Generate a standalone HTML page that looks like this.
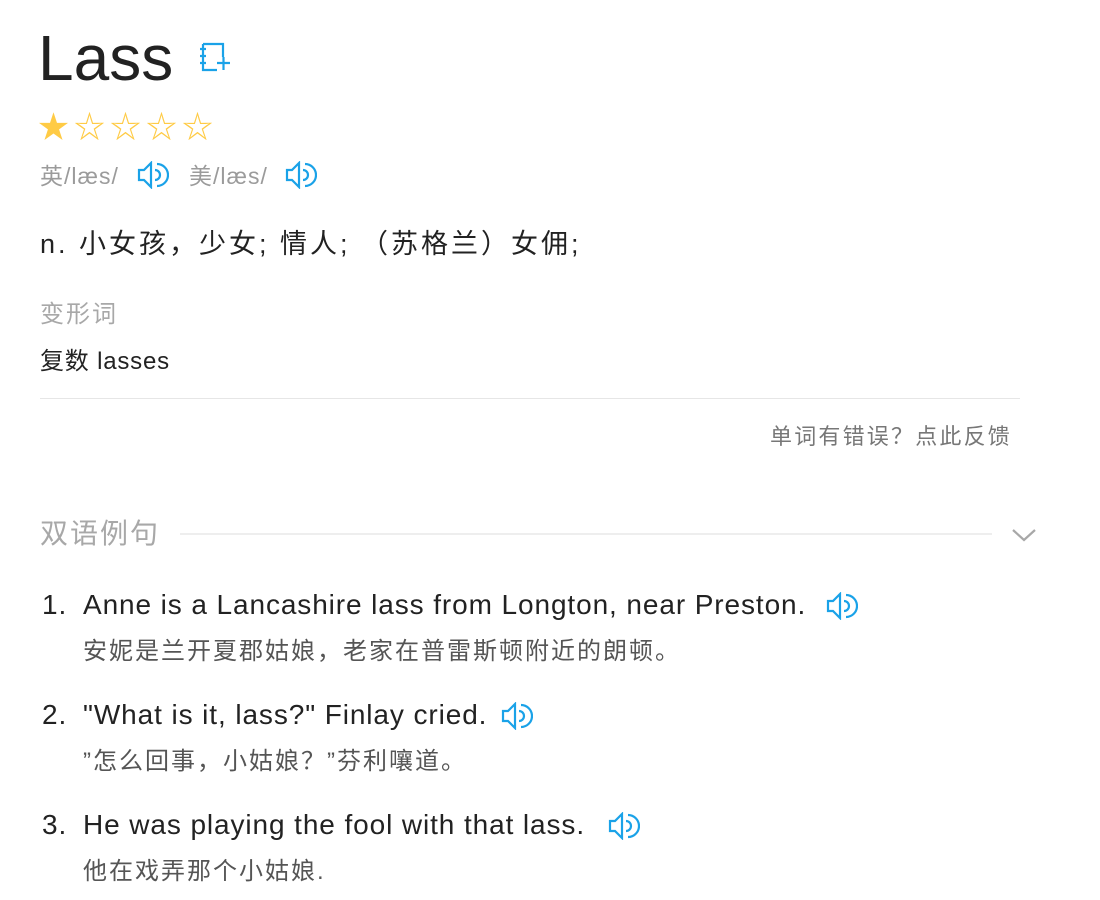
<!DOCTYPE html>
<html><head><meta charset="utf-8"><style>
body{margin:0;width:1100px;height:900px;background:#fff;position:relative;overflow:hidden;font-family:"Liberation Sans","Noto Sans CJK SC",sans-serif;}
.a{position:absolute;white-space:nowrap;}
.sp{position:absolute;}
.en{font-size:28px;line-height:34px;color:#222;letter-spacing:0.9px;}
.zh{font-size:24px;line-height:32px;color:#555;letter-spacing:2px;}
.st{display:inline-block;width:36px;}
</style></head><body>
<div class="a" style="left:38px;top:18px;font-size:64px;line-height:80px;color:#222;">Lass</div>
<svg class="sp" style="left:198px;top:42px" width="36" height="32" viewBox="0 0 36 32"><g fill="none" stroke="#1aa2e8" stroke-width="2.2"><path d="M5 2H25V15M5 2V28H19"/><path d="M2 7H8M2 14H8M2 21H8M19 21H32M25.5 15V28"/></g></svg>
<div class="a" style="left:38px;top:110px;font-size:31px;line-height:36px;color:#ffcb45;"><span class="st">★</span><span class="st">☆</span><span class="st">☆</span><span class="st">☆</span><span class="st">☆</span></div>
<div class="a" style="left:40px;top:160px;font-size:23px;line-height:32px;color:#9b9b9b;letter-spacing:1px;">英/læs/</div>
<div class="a" style="left:189px;top:160px;font-size:23px;line-height:32px;color:#9b9b9b;letter-spacing:1px;">美/læs/</div>
<svg class="sp" style="left:137px;top:161px" width="32" height="28" viewBox="0 0 32 28"><g fill="none" stroke="#1aa2e8" stroke-width="2.2"><path d="M2 9H7L14 2V26L7 19H2Z"/><path d="M18 9A5 5 0 0 1 18 19"/><path d="M20 3A11 11 0 0 1 20 25"/></g></svg>
<svg class="sp" style="left:285px;top:161px" width="32" height="28" viewBox="0 0 32 28"><g fill="none" stroke="#1aa2e8" stroke-width="2.2"><path d="M2 9H7L14 2V26L7 19H2Z"/><path d="M18 9A5 5 0 0 1 18 19"/><path d="M20 3A11 11 0 0 1 20 25"/></g></svg>
<div class="a" style="left:40px;top:227px;font-size:27px;line-height:34px;color:#222;letter-spacing:3px;">n. 小女孩，少女; 情人; （苏格兰）女佣;</div>
<div class="a" style="left:40px;top:299px;font-size:24px;line-height:32px;color:#a8a8a8;letter-spacing:2px;">变形词</div>
<div class="a" style="left:40px;top:346px;font-size:24px;line-height:32px;color:#222;letter-spacing:0.8px;">复数 lasses</div>
<div class="sp" style="left:40px;top:398px;width:980px;height:1px;background:#e6e6e6;"></div>
<div class="a" style="left:770px;top:423px;font-size:22px;line-height:28px;color:#777;letter-spacing:2.2px;">单词有错误？点此反馈</div>
<div class="a" style="left:40px;top:517px;font-size:28px;line-height:34px;color:#a8a8a8;letter-spacing:2px;">双语例句</div>
<div class="sp" style="left:180px;top:533px;width:812px;height:2px;background:#eeeeee;"></div>
<svg class="sp" style="left:1011px;top:527px" width="26" height="16" viewBox="0 0 26 16"><path d="M2 3L13 13L24 3" fill="none" stroke="#a8a8a8" stroke-width="2.2"/></svg>

<div class="a en" style="left:42px;top:588px;">1.</div>
<div class="a en" style="left:83px;top:588px;">Anne is a Lancashire lass from Longton, near Preston.</div>
<svg class="sp" style="left:826px;top:592px" width="32" height="28" viewBox="0 0 32 28"><g fill="none" stroke="#1aa2e8" stroke-width="2.2"><path d="M2 9H7L14 2V26L7 19H2Z"/><path d="M18 9A5 5 0 0 1 18 19"/><path d="M20 3A11 11 0 0 1 20 25"/></g></svg>
<div class="a zh" style="left:83px;top:636px;">安妮是兰开夏郡姑娘，老家在普雷斯顿附近的朗顿。</div>

<div class="a en" style="left:42px;top:698px;">2.</div>
<div class="a en" style="left:83px;top:698px;">"What is it, lass?" Finlay cried.</div>
<svg class="sp" style="left:501px;top:702px" width="32" height="28" viewBox="0 0 32 28"><g fill="none" stroke="#1aa2e8" stroke-width="2.2"><path d="M2 9H7L14 2V26L7 19H2Z"/><path d="M18 9A5 5 0 0 1 18 19"/><path d="M20 3A11 11 0 0 1 20 25"/></g></svg>
<div class="a zh" style="left:83px;top:746px;">”怎么回事，小姑娘？”芬利嚷道。</div>

<div class="a en" style="left:42px;top:808px;">3.</div>
<div class="a en" style="left:83px;top:808px;">He was playing the fool with that lass.</div>
<svg class="sp" style="left:608px;top:812px" width="32" height="28" viewBox="0 0 32 28"><g fill="none" stroke="#1aa2e8" stroke-width="2.2"><path d="M2 9H7L14 2V26L7 19H2Z"/><path d="M18 9A5 5 0 0 1 18 19"/><path d="M20 3A11 11 0 0 1 20 25"/></g></svg>
<div class="a zh" style="left:83px;top:856px;">他在戏弄那个小姑娘.</div>
</body></html>
